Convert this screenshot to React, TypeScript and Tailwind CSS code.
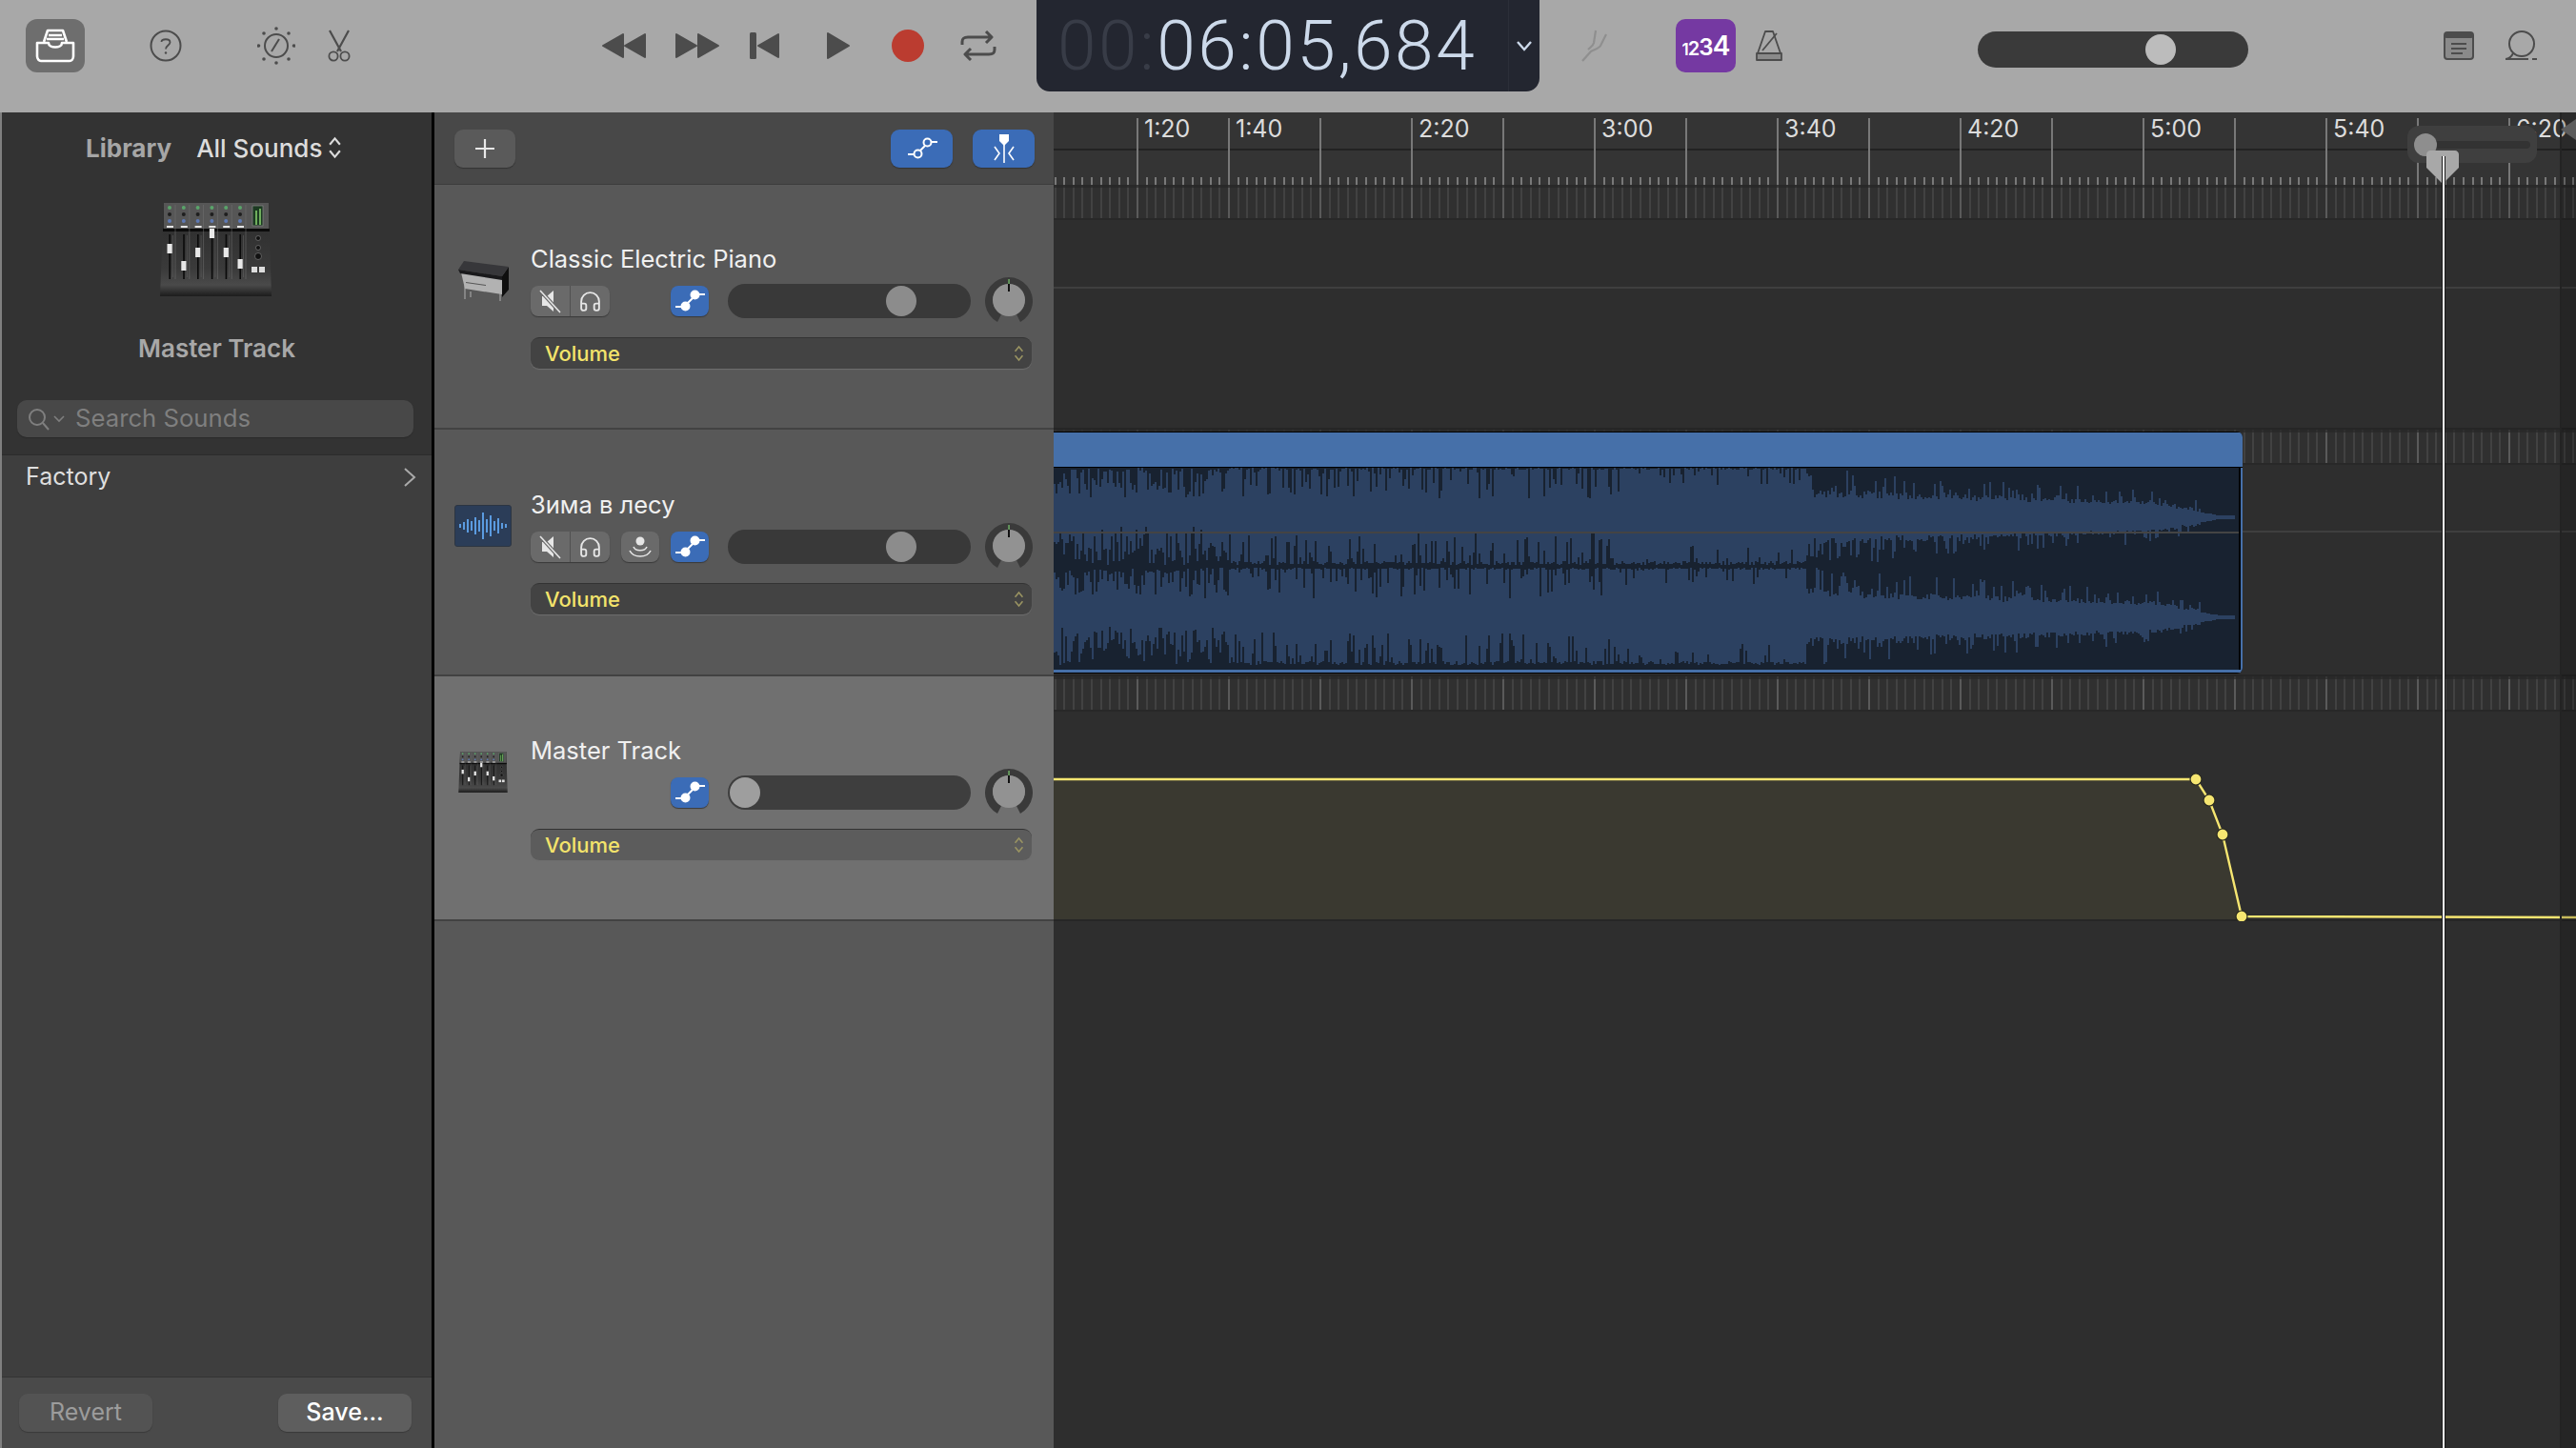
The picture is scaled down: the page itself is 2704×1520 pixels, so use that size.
import React from "react";
import { Headphones } from "lucide-react";

const ICON = "#4c4c4c";

function rng(seed: number) {
  let a = seed;
  return () => {
    a |= 0; a = (a + 0x6d2b79f5) | 0;
    let t = Math.imul(a ^ (a >>> 15), 1 | a);
    t = (t + Math.imul(t ^ (t >>> 7), 61 | t)) ^ t;
    return ((t ^ (t >>> 14)) >>> 0) / 4294967296;
  };
}

// amplitude of the wave at clip-local x (clip is 1248 wide)
function amp(x: number, r: () => number, inner: boolean) {
  const abs = x + 1106;
  if (abs < 1289) {
    return inner ? 50 - r() * 40 : 52 - (r() < 0.75 ? r() * 32 : r() * 6);
  }
  if (abs < 1700) {
    const spike = r() < 0.32;
    return inner ? (spike ? 44 - r() * 28 : 50 - r() * 4) : spike ? 50 - r() * 30 : 52 - r() * 2;
  }
  if (abs < 1895) {
    const spike = r() < 0.16;
    return inner ? (spike ? 44 - r() * 16 : 50 - r() * 4) : spike ? 50 - r() * 16 : 52 - r() * 2;
  }
  const t = Math.min(1, (abs - 1895) / 445);
  const env = t < 0.82 ? 21 - 10 * t : Math.max(1.5, (12.8 * (1 - t)) / 0.18);
  const jitter = t < 0.93 ? (r() < 0.28 ? 8 + r() * 24 : r() * 9) : r() * 1.5;
  return env + jitter * (1 - t * 0.65);
}

function channelPath(center: number, seed: number) {
  const r = rng(seed);
  const top: string[] = [];
  const bottom: string[] = [];
  for (let x = 0; x < 1240; x += 2) {
    const a = amp(x, r, false);
    const b = amp(x, r, true);
    top.push(`${x} ${center - a}`, `${x + 2} ${center - a}`);
    bottom.unshift(`${x + 2} ${center + b}`, `${x} ${center + b}`);
  }
  return `M${top.join("L")}L${bottom.join("L")}Z`;
}

function Waveform() {
  const p1 = channelPath(52, 11);
  const p2 = channelPath(157, 29);
  return (
    <svg width="1244" height="212" className="block" shapeRendering="crispEdges">
      <rect width="1244" height="212" fill="#182230" />
      <path d={p1} fill="#2c4161" />
      <path d={p2} fill="#2c4161" />
      <rect y="67" width="1244" height="2" fill="#444444" />
    </svg>
  );
}

function AutoIcon({ hollow }: { hollow?: boolean }) {
  return (
    <svg width="40" height="32" viewBox="0 0 40 32" fill="none" stroke="#fff" strokeWidth="2">
      <path d="M5 22H12M29 9H36M18 18L23 13" />
      <circle cx="15.5" cy="21.5" r="4" fill={hollow ? "none" : "#fff"} />
      <circle cx="25.5" cy="9.5" r="4" fill={hollow ? "none" : "#fff"} />
    </svg>
  );
}

function CompareIcon() {
  return (
    <svg width="32" height="32" viewBox="0 0 32 32" fill="none" stroke="#fff" strokeWidth="1.6">
      <path d="M11 1H21V8L16 13L11 8Z" fill="#fff" stroke="none" />
      <path d="M16 12V31M6 14L11 21L6 28M26 14L21 21L26 28" />
    </svg>
  );
}

function MuteIcon() {
  return (
    <svg width="24" height="26" viewBox="0 0 24 26" fill="none">
      <path d="M3 8H8L15 2V24L8 18H3Z" fill="#e6e6e6" />
      <path d="M1 2L22 25" stroke="#6a6a6a" strokeWidth="4" />
      <path d="M1 2L22 25" stroke="#e6e6e6" strokeWidth="1.6" />
    </svg>
  );
}

function ListenIcon() {
  return (
    <svg width="26" height="26" viewBox="0 0 26 26" fill="none" stroke="#e6e6e6" strokeWidth="1.6">
      <circle cx="13" cy="7" r="4.5" fill="#e6e6e6" stroke="none" />
      <path d="M6 13C8 18 18 18 20 13M2 17C6 25 20 25 24 17" />
    </svg>
  );
}

function Knob() {
  return (
    <svg width="52" height="52" viewBox="0 0 52 52" className="shrink-0">
      <path d="M14 49A25 25 0 1 1 38 49L34 41A17 17 0 1 0 18 41Z" fill="#3a3a3a" />
      <circle cx="26" cy="26" r="17" fill="#929292" />
      <rect x="25.4" y="4" width="1.3" height="5" fill="#76c06a" />
      <rect x="25" y="9" width="2" height="8" fill="#111" />
    </svg>
  );
}

function Chevrons({ color, w = 14, h = 24 }: { color: string; w?: number; h?: number }) {
  return (
    <svg width={w} height={h} viewBox="0 0 14 24" fill="none" stroke={color} strokeWidth="2">
      <path d="M2 9L7 3L12 9M2 15L7 21L12 15" />
    </svg>
  );
}

function VolumeSelect({ light }: { light?: boolean }) {
  return (
    <div
      className={`flex h-[33px] w-[526px] items-center justify-between rounded-[9px] border-t border-[#333333] pl-[15px] pr-[8px] text-[22px] font-medium text-[#f3e36b] shadow-[0_1px_1px_#6f6f6f] ${
        light ? "bg-[#5c5c5c]" : "bg-[#434343]"
      }`}
    >
      <span>Volume</span>
      <Chevrons color="#9a9462" w={11} h={20} />
    </div>
  );
}

function Fader({ pos, light }: { pos: number; light?: boolean }) {
  return (
    <div className={`relative h-[36px] w-[255px] rounded-full ${light ? "bg-[#3e3e3e]" : "bg-[#393939]"}`}>
      <div
        className={`absolute top-[2px] h-[32px] w-[32px] rounded-full ${light ? "bg-[#9e9e9e]" : "bg-[#8c8c8c]"}`}
        style={{ left: pos }}
      />
    </div>
  );
}

function MixerArt({ className, id }: { className?: string; id: string }) {
  const faders = [58, 76, 62, 42, 62, 74];
  return (
    <svg viewBox="0 0 117 100" className={className}>
      <defs>
        <linearGradient id={id} x1="0" y1="0" x2="0" y2="1">
          <stop offset="0" stopColor="#2a2a2a" />
          <stop offset="0.7" stopColor="#3a3a3a" />
          <stop offset="0.88" stopColor="#4a4a4a" />
          <stop offset="1" stopColor="#1c1c1c" />
        </linearGradient>
      </defs>
      <path d="M4 0H114L117 98H0Z" fill={`url(#${id})`} />
      <rect x="4" y="0" width="110" height="27" fill="#565656" />
      <rect x="3" y="27" width="112" height="3" fill="#0b0b0b" />
      {faders.map((y, i) => (
        <g key={i}>
          <path d={`M${16 + i * 14.8} 2V80`} stroke="#777" strokeWidth="0.5" />
          <circle cx={10 + i * 14.8} cy="5" r="2" fill="#5aa46a" />
          <circle cx={10 + i * 14.8} cy="12" r="2" fill="#1e1e1e" />
          <circle cx={10 + i * 14.8} cy="19" r="2" fill="#5e79b4" />
          <rect x={7 + i * 14.8} y="24" width="7" height="2" fill="#e4e4e4" />
          <rect x={9.4 + i * 14.8} y="33" width="1.6" height="47" fill="#0a0a0a" />
          <rect x={7.5 + i * 14.8} y={y - 15} width="5.2" height="10" fill="#e8e8e8" />
          <rect x={13 + i * 14.8} y="34" width="1" height="44" fill="#666" opacity="0.5" />
        </g>
      ))}
      <rect x="97" y="3" width="11" height="21" fill="#1c3a22" stroke="#888" strokeWidth="0.7" />
      <rect x="100" y="8" width="2" height="15" fill="#6fae5c" />
      <rect x="104" y="6" width="2" height="17" fill="#6fae5c" />
      <circle cx="103" cy="37" r="2.5" fill="#111" stroke="#888" strokeWidth="0.6" />
      <circle cx="103" cy="47" r="2.5" fill="#111" stroke="#888" strokeWidth="0.6" />
      <circle cx="103" cy="56" r="3.5" fill="#111" stroke="#888" strokeWidth="0.6" />
      <rect x="96" y="67" width="6" height="6" fill="#ddd" />
      <rect x="104" y="67" width="6" height="6" fill="#ddd" />
    </svg>
  );
}

function PianoArt() {
  return (
    <svg width="54" height="46" viewBox="0 0 54 46">
      <path d="M8 42V26M45 44V30M14 34L14 40" stroke="#b0b0b0" strokeWidth="1" />
      <path d="M47 18L54 8V32L47 40Z" fill="#0f0f0f" />
      <path d="M4 14L47 21V37L8 31Z" fill="#b2b2b2" />
      <path d="M7 2L54 8L47 18L1 11Z" fill="#37373a" />
      <path d="M1 11L47 18V22L3 15Z" fill="#1a1a1c" />
      <path d="M9 24L30 27V28L9 25Z" fill="#555" />
    </svg>
  );
}

function WaveArt() {
  const heights = [4, 8, 14, 10, 18, 12, 28, 14, 22, 10, 16, 6, 4];
  return (
    <div className="flex h-[44px] w-[60px] items-center justify-center gap-[2px] rounded-[3px] border border-[#2c3542] bg-[#2b3d58]">
      {heights.map((h, i) => (
        <div key={i} className="w-[2px] bg-[#5b9be0]" style={{ height: h }} />
      ))}
    </div>
  );
}

function TrackRow({
  name,
  art,
  height,
  top,
  light,
  fader,
  mute,
  listen,
}: {
  name: string;
  art: React.ReactNode;
  height: string;
  top: string;
  light?: boolean;
  fader: number;
  mute?: boolean;
  listen?: boolean;
}) {
  return (
    <div className={`flex shrink-0 border-b-2 border-[#424242] ${height} ${top} ${light ? "bg-[#707070]" : "bg-[#585858]"}`}>
      <div className="flex w-[101px] shrink-0 justify-center pt-[15px]">{art}</div>
      <div className="flex w-[526px] flex-col">
        <div className="h-[30px] text-[25.5px] leading-[30px] text-[#f0f0f0]">{name}</div>
        <div className="mt-[11px] flex h-[36px] items-center">
          <div className="flex w-[147px] shrink-0">
            {mute && (
              <div className="flex h-[32px] w-[83px] rounded-[8px] bg-[#6a6a6a] shadow-[0_1px_1px_#3a3a3a]">
                <div className="flex w-[42px] items-center justify-center border-r border-[#505050]">
                  <MuteIcon />
                </div>
                <div className="flex w-[41px] items-center justify-center">
                  <Headphones size={25} color="#e6e6e6" strokeWidth={1.8} />
                </div>
              </div>
            )}
            {listen && (
              <div className="ml-[12px] flex h-[32px] w-[40px] items-center justify-center rounded-[8px] bg-[#6a6a6a] shadow-[0_1px_1px_#3a3a3a]">
                <ListenIcon />
              </div>
            )}
          </div>
          <div className="flex h-[32px] w-[40px] shrink-0 items-center justify-center rounded-[8px] bg-[#3b6cb7] shadow-[0_1px_1px_#3a3a3a]">
            <AutoIcon />
          </div>
          <div className="ml-[20px]">
            <Fader pos={fader} light={light} />
          </div>
          <div className="ml-[14px] -mt-[2px]">
            <Knob />
          </div>
        </div>
        <div className="mt-[20px]">
          <VolumeSelect light={light} />
        </div>
      </div>
    </div>
  );
}

const Slot = ({ className, children }: { className: string; children: React.ReactNode }) => (
  <div className={`flex h-[56px] shrink-0 items-center justify-center ${className}`}>{children}</div>
);

function Toolbar() {
  return (
    <div className="flex h-[118px] shrink-0 items-start bg-[#a8a8a8] pt-[20px]">
      <Slot className="ml-[27px] w-[62px] rounded-[12px] bg-[#6e6e6e]">
        <svg width="42" height="36" viewBox="0 0 42 36" fill="none" stroke="#fff" strokeWidth="2.6" strokeLinejoin="round">
          <path d="M9 14L13 2H29L33 14M14 7H28M12 11H30" />
          <path d="M2 15H14C14 21 28 21 28 15H40V29C40 32 38 34 36 34H6C4 34 2 32 2 29Z" />
        </svg>
      </Slot>
      <Slot className="ml-[65px] w-[40px]">
        <svg width="34" height="34" viewBox="0 0 34 34" fill="none" stroke={ICON} strokeWidth="2">
          <circle cx="17" cy="17" r="15.5" />
          <path d="M12.5 13C12.5 9.5 21.5 9 21.5 13.5C21.5 16.5 17 16.5 17 20.5" strokeWidth="1.8" />
          <circle cx="17" cy="24.5" r="1.2" fill={ICON} stroke="none" />
        </svg>
      </Slot>
      <Slot className="ml-[74px] w-[44px]">
        <svg width="40" height="40" viewBox="0 0 40 40" fill="none" stroke={ICON} strokeWidth="2">
          <circle cx="20" cy="20" r="12" />
          <path d="M15 26L23 13" />
          {[[20, 2], [7, 7], [33, 7], [1.5, 20], [38.5, 20], [7, 34], [33, 34], [20, 38]].map(([x, y], i) => (
            <circle key={i} cx={x} cy={y} r="1.8" fill={ICON} stroke="none" />
          ))}
        </svg>
      </Slot>
      <Slot className="ml-[30px] w-[28px]">
        <svg width="26" height="34" viewBox="0 0 26 34" fill="none" stroke={ICON} strokeWidth="1.8">
          <path d="M3 1L15 23M23 1L11 23" strokeWidth="2.2" />
          <circle cx="7" cy="28" r="4.6" />
          <circle cx="19" cy="28" r="4.6" />
        </svg>
      </Slot>
      <Slot className="ml-[260px] w-[50px]">
        <svg width="48" height="28" viewBox="0 0 48 28" fill={ICON} stroke={ICON} strokeWidth="2" strokeLinejoin="round">
          <path d="M23 2V26L2 14ZM46 2V26L25 14Z" />
        </svg>
      </Slot>
      <Slot className="ml-[27px] w-[50px]">
        <svg width="48" height="28" viewBox="0 0 48 28" fill={ICON} stroke={ICON} strokeWidth="2" strokeLinejoin="round">
          <path d="M2 2V26L23 14ZM25 2V26L46 14Z" />
        </svg>
      </Slot>
      <Slot className="ml-[28px] w-[36px]">
        <svg width="32" height="28" viewBox="0 0 32 28" fill={ICON}>
          <rect x="0" y="0" width="7" height="28" rx="1.5" />
          <path d="M30 2V26L9 14Z" stroke={ICON} strokeWidth="2" strokeLinejoin="round" />
        </svg>
      </Slot>
      <Slot className="ml-[44px] w-[30px]">
        <svg width="26" height="30" viewBox="0 0 26 30" fill={ICON} stroke={ICON} strokeWidth="2" strokeLinejoin="round">
          <path d="M2 2V28L24 15Z" />
        </svg>
      </Slot>
      <Slot className="ml-[40px] w-[36px]">
        <div className="h-[34px] w-[34px] rounded-full bg-[#bb3c30]" />
      </Slot>
      <Slot className="ml-[36px] w-[40px]">
        <svg width="38" height="32" viewBox="0 0 38 32" fill="none" stroke={ICON} strokeWidth="3">
          <path d="M2 15V12C2 8 4 7 8 7H32M27 1L33 7L27 13" strokeLinejoin="round" />
          <path d="M36 17V20C36 24 34 25 30 25H6M11 19L5 25L11 31" strokeLinejoin="round" />
        </svg>
      </Slot>
      <div className="-mt-[20px] ml-[41px] flex h-[96px] w-[528px] shrink-0 items-center rounded-b-[14px] bg-[#232630] font-['Roboto',sans-serif] text-[73px] font-light leading-none tracking-[2.6px]">
        <div className="ml-[22px] flex w-[473px] items-center">
          <span className="text-[#383c47]">00:</span>
          <span className="text-[#ccd9ea]">06:05,684</span>
        </div>
        <div className="flex h-full flex-1 items-center justify-center border-l border-[#2b2e38]">
          <svg width="18" height="12" viewBox="0 0 18 12" fill="none" stroke="#ccd9ea" strokeWidth="2.4">
            <path d="M2 2L9 10L16 2" />
          </svg>
        </div>
      </div>
      <Slot className="ml-[43px] w-[30px]">
        <svg width="30" height="36" viewBox="0 0 30 36" fill="none" stroke="#8f8f8f" strokeWidth="2.2">
          <path d="M16 2L14 15C13 19 10 20 8 22M27 6L21 18C19 21 15 22 11 24L2 34" />
        </svg>
      </Slot>
      <Slot className="ml-[70px] w-[63px] rounded-[10px] bg-[#7539a2]">
        <div className="flex items-baseline text-white font-semibold leading-none tracking-[-0.06em]">
          <span className="text-[17px]">1</span>
          <span className="text-[20px]">2</span>
          <span className="text-[24px]">3</span>
          <span className="text-[28px]">4</span>
        </div>
      </Slot>
      <Slot className="ml-[19px] w-[32px]">
        <svg width="32" height="34" viewBox="0 0 32 34" fill="none" stroke={ICON} strokeWidth="1.8">
          <path d="M12 2H20L28 25H4Z" strokeLinejoin="round" />
          <path d="M3 25H29V32H3Z" fill="#8a8a8a" strokeLinejoin="round" />
          <path d="M9 22L24 4" />
        </svg>
      </Slot>
      <div className="ml-[203px] mt-[13px] relative h-[38px] w-[284px] shrink-0 rounded-full bg-[#3a3a3a]">
        <div className="absolute left-[176px] top-[3px] h-[32px] w-[32px] rounded-full bg-[#bcbcbc]" />
      </div>
      <Slot className="ml-[205px] w-[32px]">
        <svg width="32" height="30" viewBox="0 0 32 30" fill="none">
          <rect x="1" y="1" width="30" height="28" rx="3" fill="#8a8a8a" stroke={ICON} strokeWidth="2" />
          <rect x="1" y="1" width="30" height="6" rx="2" fill={ICON} />
          <path d="M8 13H24M8 18H24M8 23H20" stroke={ICON} strokeWidth="2" />
        </svg>
      </Slot>
      <Slot className="ml-[31px] w-[36px]">
        <svg width="36" height="32" viewBox="0 0 36 32" fill="none" stroke={ICON} strokeWidth="2">
          <circle cx="19" cy="14" r="13" />
          <path d="M10 24C8 28 6 30 2 30H26M30 30H35" />
        </svg>
      </Slot>
    </div>
  );
}

function Library() {
  return (
    <div className="flex w-[453px] shrink-0 flex-col border-l-2 border-[#808080] bg-[#333333]">
      <div className="flex h-[302px] shrink-0 flex-col">
        <div className="flex h-[74px] items-center pl-[88px] text-[26px]">
          <span className="font-bold text-[#a6a6a6]">Library</span>
          <span className="ml-[26px] font-medium text-[#dcdcdc]">All Sounds</span>
          <span className="ml-[6px]">
            <Chevrons color="#dcdcdc" w={15} h={26} />
          </span>
        </div>
        <div className="mt-[21px] flex justify-center pr-[2px]">
          <MixerArt id="mixlib" className="h-[100px] w-[117px]" />
        </div>
        <div className="mt-[38px] text-center text-[26px] font-semibold leading-[30px] text-[#a8a8a8]">Master Track</div>
      </div>
      <div className="ml-[16px] mr-[19px] flex h-[39px] items-center rounded-[10px] bg-[#484848] pl-[11px] text-[25.7px] text-[#7f7f7f] shadow-[0_1px_1px_#2a2a2a]">
        <svg width="40" height="26" viewBox="0 0 40 26" fill="none" stroke="#7f7f7f" strokeWidth="2">
          <circle cx="10" cy="11" r="8" />
          <path d="M16 17L22 24" />
          <path d="M28 10L33 15L38 10" strokeWidth="1.6" />
        </svg>
        <span className="ml-[10px]">Search Sounds</span>
      </div>
      <div className="mt-[18px] flex flex-1 flex-col border-t border-[#2c2c2c] bg-[#3e3e3e]">
        <div className="flex h-[46px] items-center justify-between pl-[25px] pr-[16px] text-[25px] text-[#dedede]">
          <span>Factory</span>
          <svg width="14" height="22" viewBox="0 0 14 22" fill="none" stroke="#aaa" strokeWidth="2">
            <path d="M2 2L12 11L2 20" />
          </svg>
        </div>
      </div>
      <div className="flex h-[75px] shrink-0 items-center justify-between border-t border-[#333333] bg-[#4a4a4a] pl-[18px] pr-[21px] text-[25px]">
        <div className="flex h-[40px] w-[140px] items-center justify-center rounded-[9px] bg-[#535353] text-[#9c9c9c] shadow-[0_1px_1px_#3a3a3a]">
          Revert
        </div>
        <div className="flex h-[40px] w-[140px] items-center justify-center rounded-[9px] bg-[#5e5e5e] font-medium text-white shadow-[0_1px_1px_#3a3a3a]">
          Save...
        </div>
      </div>
    </div>
  );
}

function TrackHeaders() {
  return (
    <div className="flex w-[653px] shrink-0 flex-col border-l-[3px] border-black bg-[#585858]">
      <div className="flex h-[76px] shrink-0 items-start justify-between border-b border-[#3c3c3c] bg-[#484848] pl-[21px] pr-[20px] pt-[18px]">
        <div className="flex h-[40px] w-[64px] items-center justify-center rounded-[9px] bg-[#5a5a5a] shadow-[0_1px_1px_#333]">
          <svg width="24" height="24" viewBox="0 0 24 24" stroke="#e8e8e8" strokeWidth="2.2">
            <path d="M12 2V22M2 12H22" />
          </svg>
        </div>
        <div className="flex gap-[21px]">
          <div className="flex h-[40px] w-[65px] items-center justify-center rounded-[9px] bg-[#3b6cb7] shadow-[0_1px_1px_#333]">
            <AutoIcon hollow />
          </div>
          <div className="flex h-[40px] w-[65px] items-center justify-center rounded-[9px] bg-[#3b6cb7] shadow-[0_1px_1px_#333]">
            <CompareIcon />
          </div>
        </div>
      </div>
      <TrackRow name="Classic Electric Piano" art={<PianoArt />} height="h-[257px]" top="pt-[63px]" fader={166} mute />
      <TrackRow name="Зима в лесу" art={<WaveArt />} height="h-[259px]" top="pt-[64px]" fader={166} mute listen />
      <TrackRow
        name="Master Track"
        art={<MixerArt id="mixtrack" className="mt-[1px] h-[44px] w-[52px]" />}
        height="h-[257px]"
        top="pt-[63px]"
        light
        fader={2}
      />
    </div>
  );
}

const LABELS: [string, number][] = [
  ["1:20", 87],
  ["1:40", 183],
  ["2:20", 375],
  ["3:00", 567],
  ["3:40", 759],
  ["4:20", 951],
  ["5:00", 1143],
  ["5:40", 1335],
  ["6:20", 1527],
];

function Ruler() {
  const minor: number[] = [];
  for (let x = 87 - 96; x < 1600; x += 9.6) minor.push(Math.round(x));
  const major: number[] = [];
  for (let x = 87; x < 1600; x += 96) major.push(x);
  return (
    <div className="relative h-[76px] shrink-0 bg-[#343434]">
      <svg width="1598" height="76" className="absolute left-0 top-0" shapeRendering="crispEdges">
        <rect y="38" width="1598" height="2" fill="#222" />
        {minor.map((x) => (
          <rect key={x} x={x} y="68" width="2" height="8" fill="#787878" />
        ))}
        {major.map((x) => (
          <rect key={x} x={x} y="6" width="2" height="70" fill="#787878" />
        ))}
      </svg>
      {LABELS.map(([t, x]) => (
        <span key={t} className="absolute top-[2px] text-[25px] leading-[30px] text-[#dcdcdc]" style={{ left: x + 8 }}>
          {t}
        </span>
      ))}
    </div>
  );
}

function Hatch() {
  const xs: number[] = [];
  for (let x = -9; x < 1600; x += 9.6) xs.push(Math.round(x));
  return (
    <svg width="1598" height="37" className="block" shapeRendering="crispEdges">
      <rect width="1598" height="37" fill="#303030" />
      {xs.map((x, i) => (
        <rect key={x} x={x} width={2} height="37" fill={i % 10 === 0 ? "#5a5a5a" : "#424242"} />
      ))}
      <rect width="1598" height="3" fill="#262626" opacity="0.7" />
      <rect y="35" width="1598" height="2" fill="#282828" />
    </svg>
  );
}

function Timeline() {
  const pts = "1199,108 1213,130 1227,166 1247,252";
  return (
    <div className="relative flex min-w-0 flex-1 flex-col overflow-hidden bg-[#2e2e2e]">
      <Ruler />
      <div className="relative h-[257px] shrink-0 border-b-2 border-[#262626]">
        <Hatch />
        <div className="mt-[70px] h-[2px] bg-[#3f3f3f]" />
      </div>
      <div className="relative h-[259px] shrink-0 border-b-2 border-[#262626]">
        <Hatch />
        <div className="mt-[69px] h-[2px] bg-[#3f3f3f]" />
        <div className="absolute left-0 top-[2px] flex h-[254px] w-[1248px] flex-col overflow-hidden rounded-r-[6px] bg-black">
          <div className="mt-[1px] h-[36px] shrink-0 bg-[#4670a9]" />
          <div className="mt-[1px] flex h-[212px] shrink-0 border-r-2 border-[#4670a9]">
            <Waveform />
          </div>
          <div className="h-[3px] shrink-0 bg-[#4670a9]" />
        </div>
      </div>
      <div className="relative h-[257px] shrink-0 border-b-2 border-[#262626]">
        <Hatch />
        <svg width="1598" height="257" className="absolute left-0 top-0">
          <polygon points={`0,108 ${pts} 1247,255 0,255`} fill="#3a3930" />
          <polyline points={`0,108 ${pts} 1598,253`} fill="none" stroke="#f6e671" strokeWidth="2.4" />
          {pts.split(" ").map((p) => {
            const [x, y] = p.split(",");
            return <circle key={p} cx={x} cy={y} r="6" fill="#f6e671" stroke="#2a2a20" strokeWidth="1.2" />;
          })}
        </svg>
      </div>
      <div className="absolute bottom-0 right-0 top-0 w-[17px] border-l-2 border-[#232323] bg-[#00000030]" />
      <div className="absolute left-[1421px] top-[14px] h-[39px] w-[136px] rounded-[12px] bg-[#3f3f3f]">
        <div className="absolute left-[23px] top-[16px] h-[8px] w-[106px] rounded-full bg-[#333333]" />
        <div className="absolute left-[7px] top-[8px] h-[24px] w-[24px] rounded-full bg-[#8e8e8e]" />
      </div>
      <svg width="34" height="36" viewBox="0 0 34 36" className="absolute left-[1441px] top-[40px]">
        <path d="M4 0H30C32 0 34 2 34 4V18L17 35L0 18V4C0 2 2 0 4 0Z" fill="#a8a8a8" />
      </svg>
      <div className="absolute bottom-0 left-[1458px] top-[46px] w-[2px] bg-white shadow-[-1px_0_0_#1a1a1a,1px_0_0_#1a1a1a]" />
      <svg width="16" height="22" viewBox="0 0 16 22" className="absolute right-0 top-[7px]">
        <path d="M0 11L16 0V22Z" fill="#5c5c5c" />
      </svg>
    </div>
  );
}

export default function App() {
  return (
    <div className="flex h-[1520px] w-[2704px] flex-col overflow-hidden bg-[#2e2e2e] font-['Inter',sans-serif]">
      <Toolbar />
      <div className="flex min-h-0 flex-1">
        <Library />
        <TrackHeaders />
        <Timeline />
      </div>
    </div>
  );
}
